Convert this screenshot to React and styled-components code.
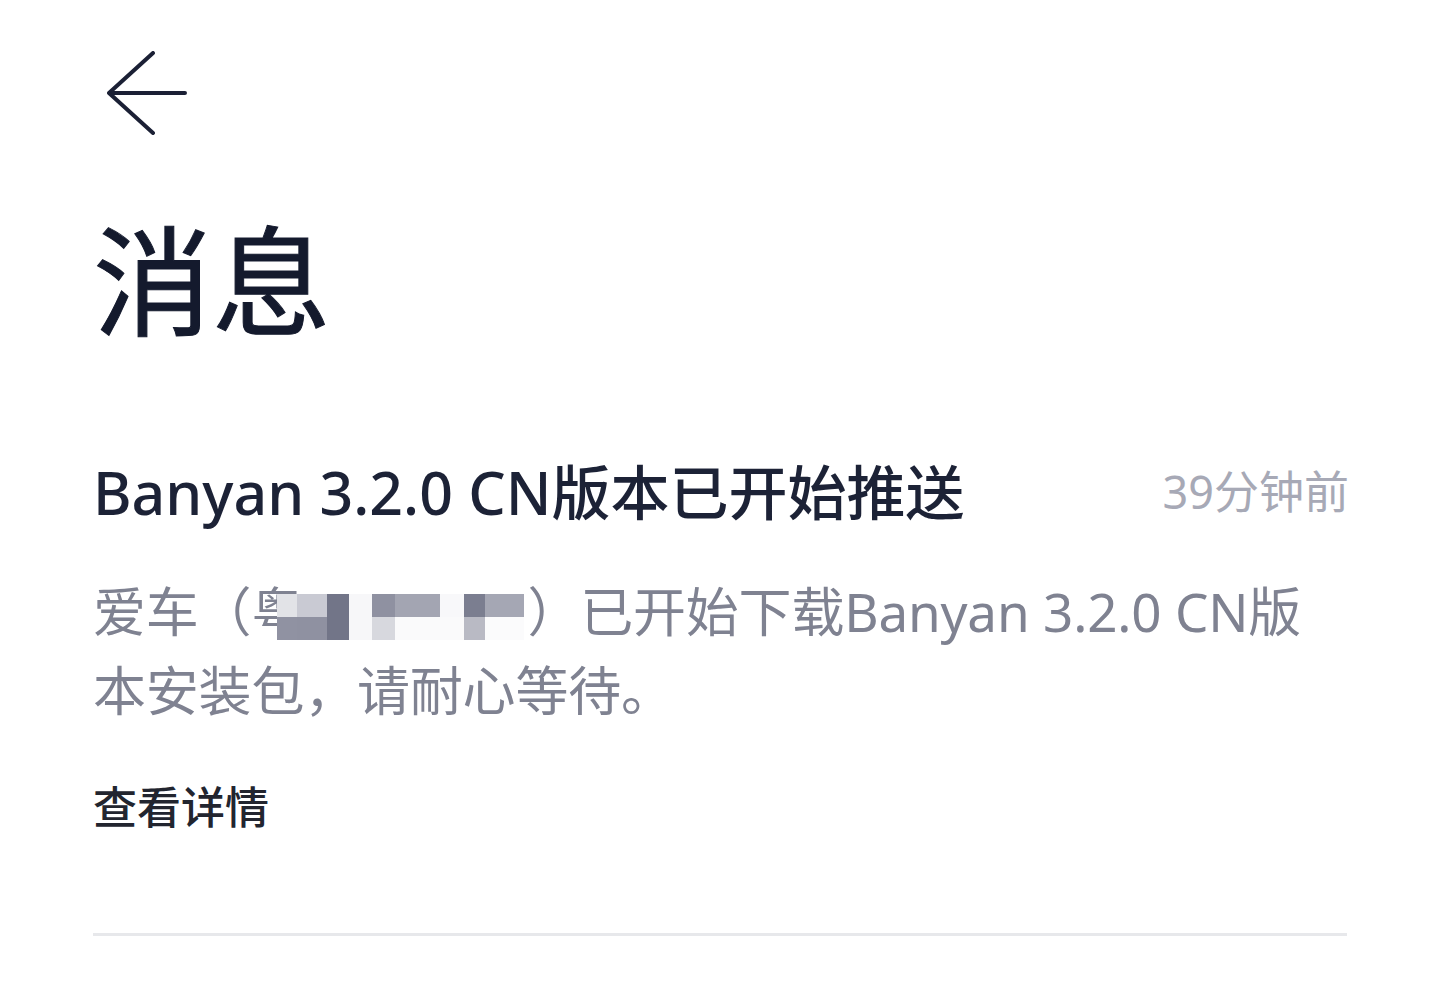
import React from "react";
import styled, { createGlobalStyle } from "styled-components";

const GlobalStyle = createGlobalStyle`
  html, body {
    margin: 0;
    padding: 0;
    background: #ffffff;
  }
  body {
    font-family: "Noto Sans", "Noto Sans CJK SC", sans-serif;
    -webkit-font-smoothing: antialiased;
  }
`;

// mosaic hiding the licence plate: [width, top tone, bottom tone]
const mosaicCols = [
  [20, "#e2e3e7", "#9092a2"],
  [30, "#c9cad3", "#8f91a1"],
  [22, "#727588", "#727588"],
  [23, "#f7f7f9", "#f7f7f9"],
  [23, "#8f91a1", "#d7d8de"],
  [45, "#a3a5b2", "#fafafb"],
  [24, "#f8f8fa", "#fafafb"],
  [21, "#7b7e90", "#b9bac4"],
  [39, "#a5a7b4", "#fbfbfc"],
];

const Page = styled.div`
  width: 1440px;
  min-height: 995px;
  box-sizing: border-box;
  padding: 0 93px;
  background: #fff;
`;

const Header = styled.header`
  display: flex;
  align-items: center;
  padding-top: 50px;
  padding-left: 14px;
  height: 86px;
`;

const BackButton = styled.button`
  display: flex;
  align-items: center;
  justify-content: center;
  padding: 0;
  border: 0;
  background: transparent;
  cursor: pointer;
  color: #1b2035;
`;

const PageTitle = styled.h1`
  margin: 80px 0 0;
  font-family: "Noto Sans CJK SC", sans-serif;
  font-size: 119px;
  line-height: 1;
  font-weight: 400;
  color: #141a2d;
  -webkit-text-stroke: 1px #141a2d;
`;

const MessageList = styled.section`
  margin-top: 125px;
`;

const MessageCard = styled.article`
  padding-bottom: 102px;
  border-bottom: 3px solid #e7e8eb;
`;

const MessageHead = styled.div`
  display: flex;
  align-items: center;
  justify-content: space-between;
  gap: 24px;
`;

const MessageTitle = styled.h2`
  margin: 0;
  font-size: 59px;
  line-height: 64px;
  font-weight: 500;
  color: #1c2236;
`;

const TimeAgo = styled.span`
  font-size: 45px;
  line-height: 64px;
  color: #a7a9b6;
  white-space: nowrap;
  margin-right: -2px;
`;

const MessageBody = styled.p`
  margin: 48px 0 0;
  padding-right: 40px;
  font-size: 53px;
  line-height: 79px;
  color: #7f8291;
  letter-spacing: -0.2px;
`;

const Plate = styled.span`
  position: relative;
  display: inline-block;
  width: 276px;
  line-height: 60px;
`;

const Mosaic = styled.span`
  position: absolute;
  left: 26px;
  top: 12px;
  height: 46px;
  display: grid;
  grid-template-rows: 23px 23px;
  grid-auto-flow: column;
  grid-template-columns: ${(p) => p.$cols.map((c) => `${c[0]}px`).join(" ")};
  filter: blur(0.6px);
`;

const MosaicCell = styled.span`
  background: ${(p) => p.$tone};
`;

const DetailLink = styled.a`
  display: inline-block;
  margin-top: 49px;
  font-family: "Noto Sans CJK SC", sans-serif;
  font-size: 44px;
  line-height: 52px;
  font-weight: 500;
  color: #22252f;
  text-decoration: none;
`;

const BackArrow = () => (
  <svg width="80" height="84" viewBox="0 0 80 84" fill="none">
    <path
      d="M46 2 L2 42 L46 82 M2 42 H78"
      stroke="currentColor"
      strokeWidth="4"
      strokeLinecap="round"
      strokeLinejoin="round"
    />
  </svg>
);

const App = () => {
  return (
    <>
      <GlobalStyle />
      <Page>
        <Header>
          <BackButton aria-label="返回">
            <BackArrow />
          </BackButton>
        </Header>

        <PageTitle>消息</PageTitle>

        <MessageList>
          <MessageCard>
            <MessageHead>
              <MessageTitle>Banyan 3.2.0 CN版本已开始推送</MessageTitle>
              <TimeAgo>39分钟前</TimeAgo>
            </MessageHead>

            <MessageBody>
              爱车（
              <Plate>
                粤
                <Mosaic $cols={mosaicCols} aria-hidden="true">
                  {mosaicCols.map(([w, top, bottom], i) => (
                    <React.Fragment key={i}>
                      <MosaicCell $tone={top} />
                      <MosaicCell $tone={bottom} />
                    </React.Fragment>
                  ))}
                </Mosaic>
              </Plate>
              ）已开始下载Banyan 3.2.0 CN版本安装包，请耐心等待。
            </MessageBody>

            <DetailLink href="#">查看详情</DetailLink>
          </MessageCard>
        </MessageList>
      </Page>
    </>
  );
};

export default App;
